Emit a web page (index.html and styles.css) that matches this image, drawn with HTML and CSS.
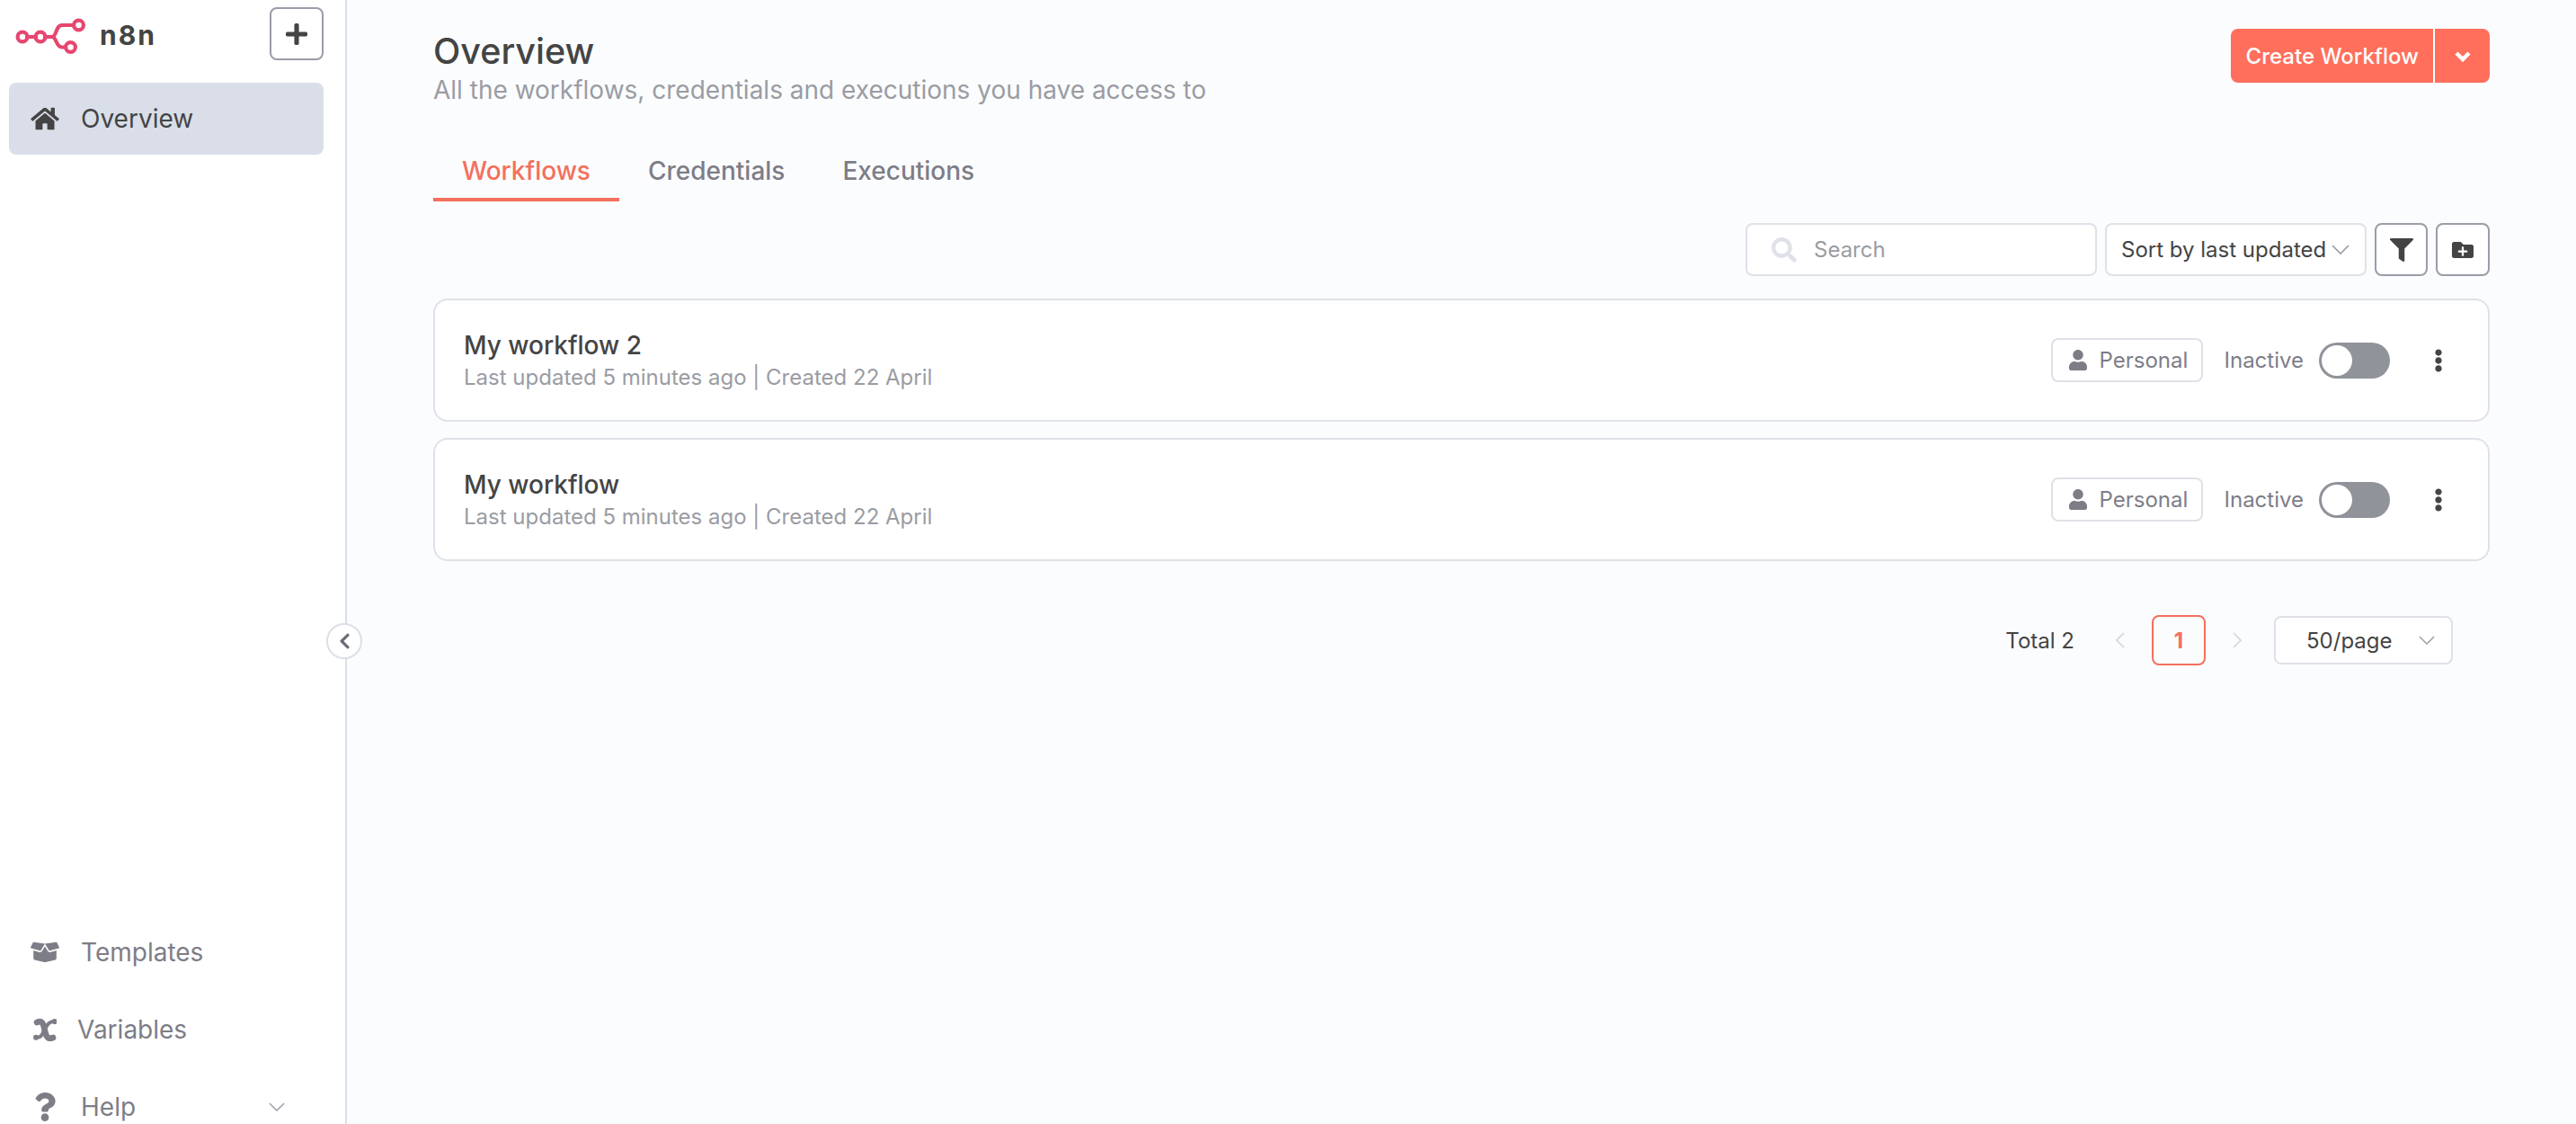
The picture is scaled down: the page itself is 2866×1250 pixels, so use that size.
FILE: index.html
```html
<!DOCTYPE html>
<html lang="en">
<head>
  <meta charset="UTF-8" />
  <title>Overview - n8n</title>
  <link rel="stylesheet" href="styles.css">
</head>
<body>
  <div class="app">
    <aside class="sidebar">
      <div class="brand">
        <div class="logo">
          <svg class="logo-mark" viewBox="16 18 80 44" stroke-width="4.2" stroke-linecap="round">
            <circle cx="25" cy="41" r="5.400"/>
            <circle cx="45" cy="41" r="5.400"/>
            <circle cx="87.500" cy="28" r="5.400"/>
            <circle cx="78.500" cy="52.500" r="5.400"/>
            <path d="M30 41h10M50 41h8c5 0 4-13 11-13h13M58 41c5 0 4 11.500 11 11.500h4"/>
          </svg>
          <span class="logo-text">n8n</span>
        </div>
        <button class="add-btn">
          <svg class="icon-plus" viewBox="0 0 448 512"><path d="M416 208H272V64c0-17.67-14.33-32-32-32h-32c-17.67 0-32 14.33-32 32v144H32c-17.67 0-32 14.33-32 32v32c0 17.67 14.33 32 32 32h144v144c0 17.67 14.33 32 32 32h32c17.67 0 32-14.33 32-32V304h144c17.67 0 32-14.33 32-32v-32c0-17.67-14.33-32-32-32z"/></svg>
        </button>
      </div>

      <a class="nav-item active">
        <span class="nav-icon"><svg viewBox="0 0 576 512"><path d="M280.37 148.26L96 300.11V464a16 16 0 0 0 16 16l112.06-.29a16 16 0 0 0 15.92-16V368a16 16 0 0 1 16-16h64a16 16 0 0 1 16 16v95.64a16 16 0 0 0 16 16.05L464 480a16 16 0 0 0 16-16V300L295.67 148.26a12.19 12.19 0 0 0-15.3 0zM571.6 251.47L488 182.56V44.05a12 12 0 0 0-12-12h-56a12 12 0 0 0-12 12v72.61L318.47 43a48 48 0 0 0-61 0L4.34 251.47a12 12 0 0 0-1.6 16.9l25.5 31A12 12 0 0 0 45.15 301l235.22-193.74a12.19 12.19 0 0 1 15.3 0L530.9 301a12 12 0 0 0 16.9-1.6l25.5-31a12 12 0 0 0-1.7-16.93z"/></svg></span>
        Overview
      </a>

      <div class="nav-bottom">
        <a class="nav-item">
          <span class="nav-icon"><svg viewBox="0 0 640 512"><path d="M425.7 256c-16.9 0-32.8-9-41.4-23.4L320 126l-64.2 106.6c-8.7 14.5-24.6 23.5-41.5 23.5-4.5 0-9-.6-13.3-1.9L64 215v178c0 14.7 10 27.5 24.2 31l216.2 54.1c10.2 2.5 20.9 2.5 31 0L551.8 424c14.2-3.6 24.2-16.4 24.2-31V215l-137 39.1c-4.3 1.3-8.8 1.9-13.3 1.9zm212.6-112.2L586.8 41c-3.1-6.2-9.8-9.8-16.7-8.9L320 64l91.7 152.1c3.8 6.3 11.4 9.3 18.5 7.3l197.9-56.5c9.9-2.9 14.7-13.9 10.2-23.1zM53.2 41L1.7 143.8c-4.6 9.2.3 20.2 10.1 23l197.9 56.5c7.1 2 14.7-1 18.5-7.3L320 64 69.8 32.1c-6.9-.8-13.5 2.7-16.6 8.9z"/></svg></span>
          Templates
        </a>
        <a class="nav-item nav-variables">
          <span class="nav-icon">
            <svg class="icon-variable" viewBox="30 21 78 78" stroke-linecap="round">
              <path stroke-width="20" d="M42 36c12-6 20-2 24 16s6 36 20 38l10-3"/>
              <path stroke-width="12" d="M102 33c-11-1-23 5-29 19"/>
              <path stroke-width="12" d="M40 85c10 3 20-3 24-19"/>
              <circle class="dot" cx="101" cy="33" r="9"/>
              <circle class="dot" cx="39" cy="86" r="9"/>
            </svg>
          </span>
          Variables
        </a>
        <a class="nav-item">
          <span class="nav-icon"><svg class="icon-help" viewBox="0 0 384 512"><path d="M202.021 0C122.202 0 70.503 32.703 29.914 91.026c-7.363 10.58-5.093 25.086 5.178 32.874l43.138 32.709c10.373 7.865 25.132 6.026 33.253-4.148 25.049-31.381 43.63-49.449 82.757-49.449 30.764 0 68.816 19.799 68.816 49.631 0 22.552-18.617 34.134-48.993 51.164-35.423 19.86-82.299 44.576-82.299 106.405V320c0 13.255 10.745 24 24 24h72.471c13.255 0 24-10.745 24-24v-5.773c0-42.86 125.268-44.645 125.268-160.627C377.504 66.256 286.902 0 202.021 0zM192 373.459c-38.196 0-69.271 31.075-69.271 69.271 0 38.195 31.075 69.27 69.271 69.27s69.271-31.075 69.271-69.271-31.075-69.27-69.271-69.27z"/></svg></span>
          Help
          <svg class="caret help-caret" viewBox="0 0 20 12"><path d="M1 1l9 9 9-9"/></svg>
        </a>
      </div>
    </aside>

    <button class="collapse-btn">
      <svg viewBox="0 0 320 512"><path d="M34.52 239.03L228.87 44.69c9.37-9.37 24.57-9.37 33.94 0l22.67 22.67c9.36 9.36 9.37 24.52.04 33.9L131.49 256l154.02 154.75c9.34 9.38 9.32 24.54-.04 33.9l-22.67 22.67c-9.37 9.37-24.57 9.37-33.94 0L34.52 272.97c-9.37-9.37-9.37-24.57 0-33.94z"/></svg>
    </button>

    <main class="main">
      <div class="page-header">
        <div>
          <h1>Overview</h1>
          <p class="subtitle">All the workflows, credentials and executions you have access to</p>
        </div>
        <div class="create-btn">
          <span class="create-label">Create Workflow</span>
          <span class="create-arrow">
            <svg viewBox="0 0 18 13"><path d="M2 3l7 7 7-7"/></svg>
          </span>
        </div>
      </div>

      <div class="tabs">
        <a class="tab active">Workflows</a>
        <a class="tab">Credentials</a>
        <a class="tab">Executions</a>
      </div>

      <div class="toolbar">
        <div class="search">
          <svg viewBox="0 0 512 512"><path d="M505 442.7L405.3 343c-4.5-4.5-10.6-7-17-7H372c27.6-35.3 44-79.7 44-128C416 93.1 322.9 0 208 0S0 93.1 0 208s93.1 208 208 208c48.3 0 92.7-16.4 128-44v16.3c0 6.4 2.5 12.5 7 17l99.7 99.7c9.4 9.4 24.6 9.4 33.9 0l28.3-28.3c9.4-9.4 9.4-24.6.1-34zM208 336c-70.7 0-128-57.2-128-128 0-70.7 57.2-128 128-128 70.7 0 128 57.2 128 128 0 70.7-57.2 128-128 128z"/></svg>
          <span>Search</span>
        </div>
        <div class="sort">
          <span>Sort by last updated</span>
          <svg class="caret" viewBox="0 0 20 12"><path d="M1 1l9 9 9-9"/></svg>
        </div>
        <button class="tool-btn">
          <svg class="icon-filter" viewBox="0 0 512 512"><path d="M487.976 0H24.028C2.71 0-8.047 25.866 7.058 40.971L192 225.941V432c0 7.831 3.821 15.17 10.237 19.662l80 55.98C298.02 518.69 320 507.493 320 487.98V225.941l184.947-184.97C520.021 25.896 509.338 0 487.976 0z"/></svg>
        </button>
        <button class="tool-btn">
          <svg class="icon-folder" viewBox="0 0 512 512"><path d="M464 128H272l-64-64H48C21.49 64 0 85.49 0 112v288c0 26.51 21.49 48 48 48h416c26.51 0 48-21.49 48-48V176c0-26.51-21.49-48-48-48zm-96 168c0 8.84-7.16 16-16 16h-72v72c0 8.84-7.16 16-16 16h-16c-8.84 0-16-7.16-16-16v-72h-72c-8.84 0-16-7.16-16-16v-16c0-8.84 7.16-16 16-16h72v-72c0-8.84 7.16-16 16-16h16c8.84 0 16 7.16 16 16v72h72c8.84 0 16 7.16 16 16v16z"/></svg>
        </button>
      </div>

      <div class="cards">
        <div class="card">
          <div>
            <div class="card-title">My workflow 2</div>
            <div class="card-meta">Last updated 5 minutes ago | Created 22 April</div>
          </div>
          <div class="card-actions">
            <span class="badge">
              <svg viewBox="0 0 448 512"><path d="M224 256c70.7 0 128-57.3 128-128S294.7 0 224 0 96 57.3 96 128s57.3 128 128 128zm89.6 32h-16.7c-22.2 10.2-46.9 16-72.9 16s-50.6-5.800-72.900-16h-16.700C60.200 288 0 348.200 0 422.400V464c0 26.500 21.500 48 48 48h352c26.500 0 48-21.500 48-48v-41.600c0-74.200-60.200-134.400-134.400-134.400z"/></svg>
              Personal
            </span>
            <span class="status">Inactive</span>
            <span class="toggle"><span class="knob"></span></span>
            <button class="more">
              <svg viewBox="0 0 192 512"><path d="M96 184c39.8 0 72 32.2 72 72s-32.2 72-72 72-72-32.2-72-72 32.2-72 72-72zM24 80c0 39.8 32.2 72 72 72s72-32.2 72-72S135.8 8 96 8 24 40.2 24 80zm0 352c0 39.8 32.2 72 72 72s72-32.2 72-72-32.2-72-72-72-72 32.2-72 72z"/></svg>
            </button>
          </div>
        </div>
        <div class="card">
          <div>
            <div class="card-title">My workflow</div>
            <div class="card-meta">Last updated 5 minutes ago | Created 22 April</div>
          </div>
          <div class="card-actions">
            <span class="badge">
              <svg viewBox="0 0 448 512"><path d="M224 256c70.7 0 128-57.3 128-128S294.7 0 224 0 96 57.3 96 128s57.3 128 128 128zm89.6 32h-16.7c-22.2 10.2-46.9 16-72.9 16s-50.6-5.800-72.900-16h-16.700C60.200 288 0 348.200 0 422.400V464c0 26.500 21.500 48 48 48h352c26.500 0 48-21.500 48-48v-41.600c0-74.200-60.200-134.400-134.400-134.400z"/></svg>
              Personal
            </span>
            <span class="status">Inactive</span>
            <span class="toggle"><span class="knob"></span></span>
            <button class="more">
              <svg viewBox="0 0 192 512"><path d="M96 184c39.8 0 72 32.2 72 72s-32.2 72-72 72-72-32.2-72-72 32.2-72 72-72zM24 80c0 39.8 32.2 72 72 72s72-32.2 72-72S135.8 8 96 8 24 40.2 24 80zm0 352c0 39.8 32.2 72 72 72s72-32.2 72-72-32.2-72-72-72-72 32.2-72 72z"/></svg>
            </button>
          </div>
        </div>
      </div>

      <div class="pagination">
        <span class="total">Total 2</span>
        <svg class="page-arrow" viewBox="0 0 12 20"><path d="M11 1l-9 9 9 9"/></svg>
        <span class="page-num">1</span>
        <svg class="page-arrow" viewBox="0 0 12 20"><path d="M1 1l9 9-9 9"/></svg>
        <div class="page-size">
          <span>50/page</span>
          <svg class="caret" viewBox="0 0 20 12"><path d="M1 1l9 9 9-9"/></svg>
        </div>
      </div>
    </main>
  </div>
</body>
</html>
```

FILE: styles.css
```css
/* Base */
* { box-sizing: border-box; margin: 0; padding: 0; }
html, body { height: 100%; overflow: hidden; }
body { font-family: 'Inter', sans-serif; color: #444; background: #fbfcfe; font-size: 28px; }
svg { display: block; fill: currentColor; }
button { background: none; border: none; font: inherit; color: inherit; }

.app { display: flex; height: 1250px; position: relative; }

/* Sidebar */
.sidebar { width: 386px; flex: none; height: 100%; display: flex; flex-direction: column; background: #fff; border-right: 2px solid #dbdfe7; padding: 8px 24px 0 10px; }
.brand { display: flex; justify-content: space-between; align-items: flex-start; height: 84px; }
.logo { display: flex; align-items: center; padding: 10px 0 0 6px; }
.logo-mark { width: 80px; height: 44px; fill: none; stroke: #e6476f; }
.logo-text { font-size: 30px; font-weight: 700; letter-spacing: 2px; margin: -3px 0 0 15px; color: #444; line-height: 44px; }
.add-btn { width: 60px; height: 59px; border: 2px solid #9a9ca8; border-radius: 8px; display: flex; align-items: center; justify-content: center; background: #fff; }
.icon-plus { width: 24px; height: 28px; }

.nav-item { display: flex; align-items: center; height: 80px; padding-left: 24px; border-radius: 8px; color: #7d7d87; line-height: 36px; }
.nav-item.active { background: #d9dee8; color: #444; }
.nav-icon { width: 32px; height: 32px; margin-right: 24px; display: flex; align-items: center; justify-content: center; flex: none; }
.nav-icon svg { width: 32px; height: 28px; }
.nav-icon .icon-help { width: 24px; height: 32px; }
.nav-variables .nav-icon { margin-right: 20px; }
.nav-variables .nav-icon svg { width: 26px; height: 26px; }
.nav-icon .icon-variable { fill: none; stroke: #7d7d87; }
.icon-variable .dot { fill: #7d7d87; stroke: none; }

.nav-bottom { margin-top: auto; margin-bottom: -21px; display: flex; flex-direction: column; gap: 6px; }
.caret { width: 18px; height: 11px; fill: none; stroke: #9a9ca3; stroke-width: 1.6; flex: none; }
.help-caret { margin-left: auto; margin-right: 43px; }

.collapse-btn { position: absolute; left: 363px; top: 693px; width: 40px; height: 40px; border-radius: 50%; border: 2px solid #dbdfe7; background: #fff; display: flex; align-items: center; justify-content: center; color: #6b6b75; }
.collapse-btn svg { width: 13px; height: 20px; }

/* Main */
.main { flex: 1; padding: 32px 96px 0; min-width: 0; }
.page-header { display: flex; justify-content: space-between; align-items: flex-start; }
h1 { font-size: 39.5px; font-weight: 500; line-height: 50px; color: #444; }
.subtitle { font-size: 28px; line-height: 36px; color: #9a9ca3; }

.create-btn { display: flex; height: 60px; background: #ff6f5c; color: #fff; border-radius: 8px; font-size: 24px; font-weight: 500; align-items: center; }
.create-label { padding: 0 16px 0 17px; height: 100%; display: flex; align-items: center; border-right: 2px solid #fff; }
.create-arrow { width: 61px; display: flex; justify-content: center; }
.create-arrow svg { width: 18px; height: 13px; fill: none; stroke: #fff; stroke-width: 4.5; }

.tabs { display: flex; margin-top: 54px; }
.tab { padding: 0 32px 12px; line-height: 36px; color: #7d7d87; font-weight: 500; border-bottom: 4px solid transparent; }
.tab.active { color: #f3705c; border-bottom-color: #f3705c; }

.toolbar { display: flex; justify-content: flex-end; align-items: stretch; height: 59px; margin-top: 24px; gap: 9px; font-size: 24px; }
.search, .sort, .badge, .page-size { border: 2px solid #dfe1e8; border-radius: 8px; background: #fff; display: flex; align-items: center; }
.search { width: 391px; padding-left: 27px; color: #9a9ca3; gap: 19px; }
.search svg { width: 28px; height: 28px; color: #dfe1e8; }
.sort { width: 291px; padding-left: 16px; justify-content: space-between; padding-right: 16px; color: #444; }
.sort .caret { width: 22px; height: 12px; }
.tool-btn { width: 59px; border: 2px solid #9a9ca8; border-radius: 8px; background: #fff; display: flex; align-items: center; justify-content: center; color: #444; }
.tool-btn:last-child { width: 60px; }
.icon-filter { width: 26px; height: 26px; }
.icon-folder { width: 24px; height: 24px; }

/* Cards */
.cards { margin-top: 25px; display: flex; flex-direction: column; gap: 18px; }
.card { height: 137px; background: #fff; border: 2px solid #dfe1e8; border-radius: 16px; display: flex; align-items: center; justify-content: space-between; padding: 0 32px; }
.card-title { font-size: 28px; font-weight: 500; line-height: 36px; color: #444; margin-top: 1px; }
.card-meta { font-size: 24px; line-height: 34px; color: #9a9ca3; margin-top: 1px; }
.card-actions { display: flex; align-items: center; }
.badge { width: 169px; height: 49px; font-size: 24px; color: #7d7d87; padding-left: 18px; gap: 14px; }
.badge svg { width: 20px; height: 23px; }
.status { font-size: 24px; color: #7d7d87; margin-left: 24px; }
.toggle { width: 79px; height: 40px; border-radius: 20px; background: #909399; margin-left: 17px; display: flex; align-items: center; padding-left: 3px; }
.knob { width: 34px; height: 34px; border-radius: 50%; background: #fff; }
.more { width: 10px; margin: 0 18px 0 49px; color: #444; }
.more svg { width: 10px; height: 26px; }

/* Pagination */
.pagination { display: flex; align-items: center; justify-content: flex-end; margin-top: 60px; padding-right: 41px; font-size: 24px; }
.total { margin-right: 45px; color: #444; }
.page-arrow { width: 11px; height: 18px; fill: none; stroke: #d8dae0; stroke-width: 2; }
.page-num { width: 60px; height: 56px; border: 2px solid #f3705c; border-radius: 8px; color: #f3705c; font-weight: 700; display: flex; align-items: center; justify-content: center; margin: 0 30px; }
.page-size { width: 199px; height: 54px; margin-left: 35px; padding: 0 18px 0 34px; justify-content: space-between; color: #444; }
```
